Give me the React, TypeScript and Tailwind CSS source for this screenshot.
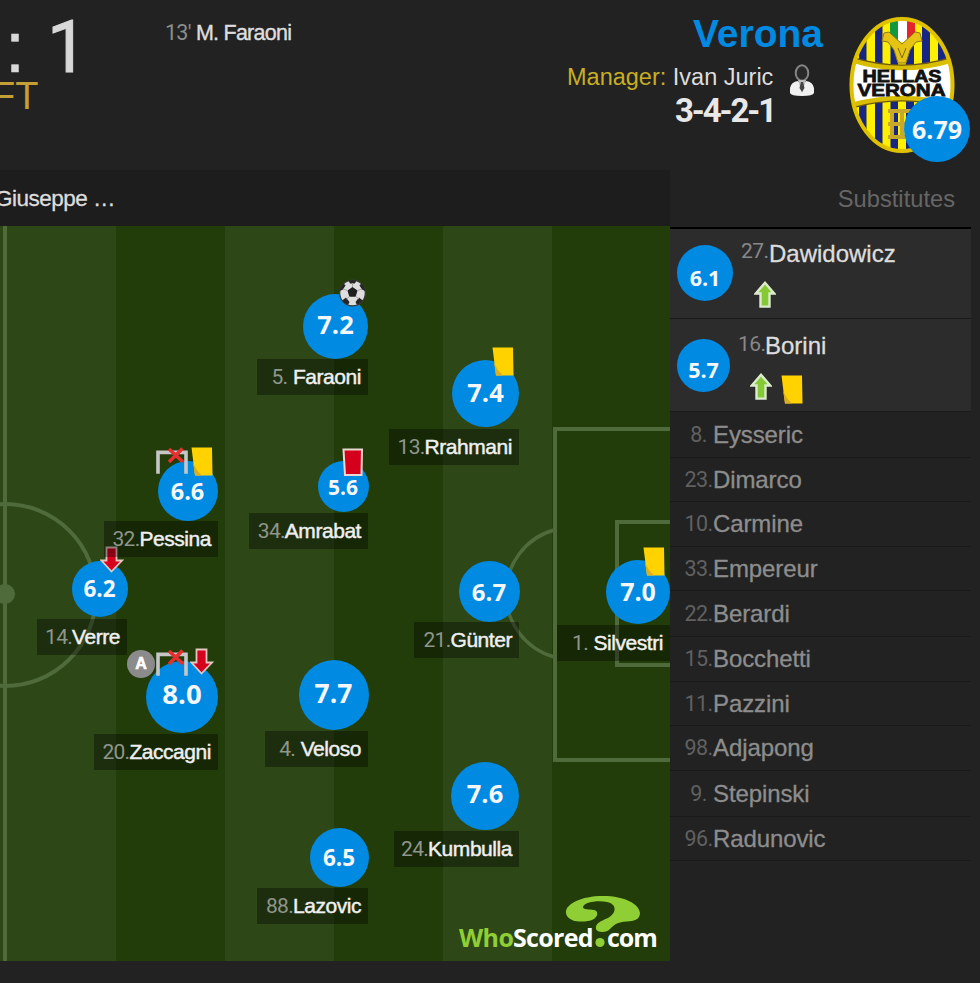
import React from "react";

type Badge = { kind: "yellow" | "red" | "ball" | "down" | "up" | "wood" | "assist"; x: number; y: number };
type Player = {
  num: string; name: string; rating: string;
  cx: number; cy: number; d: number; size: number; ty: number;
  left: number; right: number; top: number; badges: Badge[];
};

// Coordinates are relative to the pitch canvas; later players lie over earlier ones.
const players: Player[] = [
  { num: "5.", name: "Faraoni", rating: "7.2", cx: 335.5, cy: 100.5, d: 65, size: 25.5, ty: -2, left: 257, right: 368, top: 133, badges: [{ kind: "ball", x: 338, y: 53 }] },
  { num: "13.", name: "Rrahmani", rating: "7.4", cx: 485.5, cy: 167.5, d: 67, size: 25.5, ty: -1, left: 389, right: 519, top: 203, badges: [{ kind: "yellow", x: 492, y: 121 }] },
  { num: "14.", name: "Verre", rating: "6.2", cx: 99.5, cy: 363, d: 56, size: 22.5, ty: 0, left: 37, right: 127, top: 393, badges: [{ kind: "down", x: 100, y: 320 }] },
  { num: "32.", name: "Pessina", rating: "6.6", cx: 187.5, cy: 264.5, d: 60, size: 23.5, ty: 1, left: 104, right: 218, top: 295, badges: [{ kind: "wood", x: 156, y: 221 }, { kind: "yellow", x: 191, y: 221 }] },
  { num: "34.", name: "Amrabat", rating: "5.6", cx: 343, cy: 260, d: 51, size: 21, ty: 1, left: 249, right: 368, top: 287, badges: [{ kind: "red", x: 342, y: 222 }] },
  { num: "21.", name: "Günter", rating: "6.7", cx: 489, cy: 365.5, d: 61, size: 24, ty: 0, left: 414, right: 519, top: 396, badges: [] },
  { num: "1.", name: "Silvestri", rating: "7.0", cx: 638, cy: 366, d: 64, size: 25, ty: -1, left: 557, right: 670, top: 399, badges: [{ kind: "yellow", x: 643, y: 321 }] },
  { num: "20.", name: "Zaccagni", rating: "8.0", cx: 182, cy: 471, d: 72, size: 27.5, ty: -3, left: 94, right: 218, top: 508, badges: [{ kind: "assist", x: 127, y: 424 }, { kind: "wood", x: 156, y: 423 }, { kind: "down", x: 190, y: 422 }] },
  { num: "4.", name: "Veloso", rating: "7.7", cx: 333.5, cy: 469, d: 70, size: 26.5, ty: -2, left: 265, right: 368, top: 505, badges: [] },
  { num: "24.", name: "Kumbulla", rating: "7.6", cx: 485, cy: 569.5, d: 68, size: 25.5, ty: -2, left: 394, right: 519, top: 605, badges: [] },
  { num: "88.", name: "Lazovic", rating: "6.5", cx: 339, cy: 631.5, d: 59, size: 22.5, ty: 1, left: 257, right: 368, top: 662, badges: [] },
];

const reserves = [
  { num: "8.", name: "Eysseric", h: 46 },
  { num: "23.", name: "Dimarco", h: 44 },
  { num: "10.", name: "Carmine", h: 45 },
  { num: "33.", name: "Empereur", h: 44 },
  { num: "22.", name: "Berardi", h: 46 },
  { num: "15.", name: "Bocchetti", h: 45 },
  { num: "11.", name: "Pazzini", h: 44 },
  { num: "98.", name: "Adjapong", h: 45 },
  { num: "9.", name: "Stepinski", h: 46 },
  { num: "96.", name: "Radunovic", h: 44 },
];

function Icon({ kind }: { kind: Badge["kind"] }) {
  switch (kind) {
    case "yellow":
      return (
        <svg width="22" height="29" viewBox="0 0 22 29" className="block">
          <path d="M0.5 0.5H21L21.5 28.5H4Z" fill="#ffd200" />
          <path d="M2 15Q4 22 11 28.5H4Z" fill="#d9ae24" />
        </svg>
      );
    case "red":
      return (
        <svg width="22" height="29" viewBox="0 0 22 29" className="block">
          <path d="M1.5 1.5H20L19.5 27H3Z" fill="#d5001c" stroke="#ead6d2" strokeWidth="2" />
        </svg>
      );
    case "down":
      return (
        <svg width="24" height="28" viewBox="0 0 24 28" className="block">
          <path d="M6.5 1.5H16.5V14.5H22L11.5 25.5L1.5 14.5H6.5Z" fill="#d5001c" stroke="#e3c7c0" strokeWidth="1.8" />
        </svg>
      );
    case "up":
      return (
        <svg width="22" height="28" viewBox="0 0 22 28" className="block">
          <path d="M11 1.8L20.2 12.5H15.5V25.6H6.5V12.5H1.8Z" fill="#86c936" stroke="#dcebcb" strokeWidth="2.4" />
        </svg>
      );
    case "ball":
      return (
        <svg width="29" height="28" viewBox="0 0 29 28" className="block">
          <circle cx="14.5" cy="14" r="12.8" fill="#dedede" stroke="#3c3c3c" strokeWidth="1.2" />
          <path d="M14.5 8L19.5 11.5L17.7 17.8H11.3L9.5 11.5Z" fill="#1f1f1f" />
          <path d="M10.5 1.6Q14.5 0.4 18.5 1.6L16.8 4.4H12ZM2.4 9L5.3 4.6L7.6 6.2L5 10.5L1.8 12ZM26.6 9L23.7 4.6L21.4 6.2L24 10.5L27.2 12ZM4.2 21.5L8 18.6L11.5 23L10 26Q6.5 25 4.2 21.5ZM24.8 21.5L21 18.6L17.5 23L19 26Q22.5 25 24.8 21.5Z" fill="#262626" />
          <path d="M14.5 8V4M19.5 11.5L24 10M17.7 17.5L21 20M11.5 17.5L8.5 20M9.5 11.5L5 10" stroke="#a5a5a5" strokeWidth="1" />
        </svg>
      );
    case "wood":
      return (
        <svg width="32" height="30" viewBox="0 0 32 30" className="block">
          <path d="M2 26V5.5H30V26" fill="none" stroke="#c6c6c6" strokeWidth="3.6" transform="translate(0 -0.5) scale(1 1.05)" />
          <path d="M13 2L27 15M26.5 1.5L13 15" fill="none" stroke="#e5302f" strokeWidth="3.6" />
        </svg>
      );
    case "assist":
      return (
        <span className="flex h-[28px] w-[28px] items-center justify-center rounded-full bg-[#8b8b8b] text-[16px] font-bold leading-none text-white [-webkit-text-stroke:0.6px_#fff]">A</span>
      );
  }
}

function Rating({ value, d, size, ty }: { value: string; d: number; size: number; ty: number }) {
  return (
    <div className="flex items-center justify-center rounded-full bg-[#008ae2]" style={{ width: d, height: d }}>
      <span
        className="font-['Open_Sans','Noto_Sans',sans-serif] font-bold leading-none text-[#f4f6f8]"
        style={{ fontSize: size, transform: `translateY(${ty}px)` }}
      >
        {value}
      </span>
    </div>
  );
}

function PlayerPin({ p }: { p: Player }) {
  return (
    <>
      <div className="absolute" style={{ left: p.cx - p.d / 2, top: p.cy - p.d / 2 }}>
        <Rating value={p.rating} d={p.d} size={p.size} ty={p.ty} />
      </div>
      {p.badges.map((b) => (
        <div key={b.kind} className="absolute" style={{ left: b.x, top: b.y }}>
          <Icon kind={b.kind} />
        </div>
      ))}
      <div
        className="absolute flex h-[36px] items-center justify-end bg-black/35 pb-[2px] pr-[7px] text-[21px] leading-none tracking-[-0.45px]"
        style={{ left: p.left, top: p.top, width: p.right - p.left }}
      >
        <span className="w-[27px] pt-[2px] text-center font-['Roboto',sans-serif] tracking-[-0.7px] text-[#8f968b]">{p.num}</span>
        <span className="text-[#f0f0f0] [-webkit-text-stroke:0.45px_#f0f0f0]">{p.name}</span>
      </div>
    </>
  );
}

function PitchLines() {
  return (
    <svg width="670" height="736" viewBox="0 0 670 736" className="absolute inset-0">
      <g fill="none" stroke="#4f6b3b" strokeWidth="4">
        <path d="M5 0V736" />
        <circle cx="5" cy="369" r="91" />
        <path d="M670 203H555V534H670" />
        <path d="M670 296H617V439H670" />
        <path d="M554 304A66 66 0 0 0 554 431" strokeWidth="3.5" />
      </g>
      <circle cx="5" cy="368" r="10" fill="#4f6b3b" />
    </svg>
  );
}

function Brand() {
  return (
    <div className="absolute left-[459px] top-[669px] h-[56px] w-[200px]">
      <svg width="200" height="56" viewBox="0 0 200 56" className="absolute inset-0">
        <path d="M107 17C107 9 122 1 144 1C166 1 180 9 181 18C181 25 174 26 168 26.5C157 27 154 31 151 34C148 38 138 38 137 34C136 28 142 26 149 23C158 18 158 9 148 7C139 5 125 7 124 12C124 15 130 14 135 15C140 16 139 22 134 24.5C129 27 119 27 114 25.5C109 23 107 21 107 17Z" fill="#8fcf35" />
        <circle cx="141" cy="47.5" r="4.6" fill="#8fcf35" />
      </svg>
      <div className="absolute left-0 top-[29px] flex font-['Open_Sans','Noto_Sans',sans-serif] text-[25px] font-bold leading-[26px]">
        <span className="w-[54px] tracking-[-0.6px] text-[#8fcf35]">Who</span>
        <span className="w-[94px] tracking-[-0.7px] text-white">Scored</span>
        <span className="tracking-[-1px] text-white">com</span>
      </div>
    </div>
  );
}

function Crest() {
  return (
    <svg width="108" height="140" viewBox="0 0 108 140" className="block">
      <defs>
        <clipPath id="oval"><ellipse cx="54" cy="70" rx="50" ry="65" /></clipPath>
      </defs>
      <ellipse cx="54" cy="70" rx="52.5" ry="68.5" fill="#3a3420" />
      <g clipPath="url(#oval)">
        <rect width="108" height="140" fill="#fff000" />
        <path d="M11 0h7.5v140h-7.5zM27 0h7.5v140h-7.5zM42.5 0h7.5v140h-7.5zM58 0h8v140h-8zM74 0h8v140h-8zM90 0h8v140h-8z" fill="#172583" />
        <rect x="42" y="3" width="8" height="24" fill="#12983f" />
        <rect x="50" y="3" width="9" height="24" fill="#fff" />
        <rect x="59" y="3" width="8" height="24" fill="#e5242b" />
        <path d="M43 19L54 29L65 19L67 17L72 18L74 26L68 27L62 35L58 48H50L46 35L40 27L34 26L36 18L41 17Z" fill="#e6c414" stroke="#8f7a1c" />
        <path d="M50 33L54 43L58 33" fill="none" stroke="#7b681a" />
        <path d="M44 95V124M40 96H70M40 109H70M40 122H70M54 97V122M65 95V124" fill="none" stroke="#c9a92a" strokeWidth="4" />
        <path d="M0 44Q54 62 108 44V91Q54 75 0 91Z" fill="#fff" stroke="#6c5914" strokeWidth="7" />
        <path d="M0 44Q54 62 108 44V91Q54 75 0 91Z" fill="#fff" stroke="#d9bd00" strokeWidth="4.5" />
      </g>
      <ellipse cx="54" cy="70" rx="50.5" ry="66" fill="none" stroke="#dfc100" strokeWidth="4" />
      <g fill="#111" stroke="#111" strokeWidth="0.8" fontFamily="Liberation Sans, sans-serif" fontWeight="700" textAnchor="middle">
        <text x="54" y="66.5" fontSize="17" textLength="79" lengthAdjust="spacingAndGlyphs">HELLAS</text>
        <text x="53.5" y="81" fontSize="17" textLength="88" lengthAdjust="spacingAndGlyphs">VERONA</text>
      </g>
    </svg>
  );
}

function ManagerIcon() {
  return (
    <svg width="26" height="33" viewBox="0 0 26 33" className="block">
      <path d="M1 29V24Q2 18 9 17L13 22L17 17Q24 18 25 24V29Q24 32 13 32Q2 32 1 29Z" fill="#f1f1f1" />
      <ellipse cx="13" cy="9" rx="6.3" ry="7.7" fill="#292929" stroke="#858585" strokeWidth="2" />
      <path d="M9 16L13 29L17 16Z" fill="#bbb" />
      <path d="M12 18H14L15.5 24L13 28L10.5 24Z" fill="#444" />
    </svg>
  );
}

export default function App() {
  return (
    <div className="flex h-[983px] w-[980px] flex-col overflow-hidden bg-[#222] font-['Liberation_Sans',Arial,sans-serif] text-[#ddd]">
      <header className="flex h-[170px] shrink-0 justify-between">
        <div className="flex">
          <div className="w-[165px]">
            <div className="flex h-[80px] whitespace-nowrap pt-[9px] text-[72px] leading-[76px] text-[#d8d8d8]">
              <span className="w-[47px] pl-[5px] [-webkit-text-stroke:0.5px_#d8d8d8]">:</span>
              <span className="pt-px font-['Roboto',sans-serif] [-webkit-text-stroke:1px_#d8d8d8]">1</span>
            </div>
            <div className="-ml-[8px] text-[38px] leading-[32px] text-[#c49f35]">FT</div>
          </div>
          <p className="whitespace-nowrap pt-[21px] text-[21.5px] leading-[24px] tracking-[-0.75px]">
            <span className="font-['Roboto',sans-serif] text-[#8c8c8c]">13'</span> <span className="[-webkit-text-stroke:0.4px_#ddd]">M. Faraoni</span>
          </p>
        </div>
        <div className="flex">
          <div className="w-[256px]">
            <h1 className="pt-[12px] text-right text-[39px] font-bold leading-[44px] text-[#008ae2]">Verona</h1>
            <div className="flex">
              <div className="w-[206px] whitespace-nowrap text-right">
                <p className="pt-[7px] text-[23.5px] leading-[28px]"><span className="text-[#c7ae25]">Manager:</span> Ivan Juric</p>
                <p className="-mr-[2px] font-['Roboto',sans-serif] text-[33px] font-bold leading-[40px] tracking-[-2.1px] text-[#e8e8e8]">3-4-2-1</p>
              </div>
              <div className="pl-[16px] pt-[8px]"><ManagerIcon /></div>
            </div>
          </div>
          <div className="relative w-[157px] pl-[25px] pt-[15px]">
            <Crest />
            <div className="absolute left-[81px] top-[96px]"><Rating value="6.79" d={66} size={25} ty={0} /></div>
          </div>
        </div>
      </header>

      <div className="flex">
        <main className="w-[670px]">
          <div className="flex h-[56px] items-center bg-[#1d1d1d] pt-[2px]">
            <span className="-ml-[5px] text-[22.5px] leading-none tracking-[-0.5px] [-webkit-text-stroke:0.3px_#ddd]">Giuseppe …</span>
          </div>
          <div className="relative h-[735px] overflow-hidden bg-[linear-gradient(90deg,#2d4717_0_116px,#223d09_116px_225px,#2d4717_225px_334px,#223d09_334px_443px,#2d4717_443px_552px,#223d09_552px)]">
            <PitchLines />
            <Brand />
            {players.map((p) => <PlayerPin key={p.name} p={p} />)}
          </div>
        </main>

        <aside className="w-[301px]">
          <h2 className="h-[59px] border-b-2 border-black pr-[16px] pt-[15px] text-right text-[23.7px] leading-[28px] text-[#666]">Substitutes</h2>
          <div className="flex h-[90px] border-b border-[#1a1a1a] bg-[#2c2c2c] pl-[7px] pt-[16px]">
            <Rating value="6.1" d={56} size={21.5} ty={5} />
            <div className="-mt-[5px] pl-[8px]">
              <p className="flex leading-[28px]"><span className="-mt-[3px] w-[28px] font-['Roboto',sans-serif] text-[21px] tracking-[-0.6px] text-[#888]">27.</span><span className="text-[24px] [-webkit-text-stroke:0.3px_#ddd]">Dawidowicz</span></p>
              <div className="pl-[13px] pt-[13px]"><Icon kind="up" /></div>
            </div>
          </div>
          <div className="flex h-[93px] border-b border-[#1a1a1a] bg-[#2c2c2c] pl-[7px] pt-[20px]">
            <Rating value="5.7" d={53} size={21.5} ty={4} />
            <div className="-mt-[7px] pl-[8px]">
              <p className="flex leading-[28px]"><span className="-mt-[2px] w-[27px] font-['Roboto',sans-serif] text-[21px] tracking-[-0.6px] text-[#888]">16.</span><span className="text-[24px] [-webkit-text-stroke:0.3px_#ddd]">Borini</span></p>
              <div className="flex gap-[9px] pl-[12px] pt-[13px]">
                <Icon kind="up" />
                <div className="pt-[2px]"><Icon kind="yellow" /></div>
              </div>
            </div>
          </div>
          {reserves.map((r) => (
            <div key={r.name} className="flex items-center border-b border-[#1a1a1a] pl-[14px] leading-[28px]" style={{ height: r.h }}>
              <span className="w-[29px] text-center font-['Roboto',sans-serif] text-[21.5px] tracking-[-0.6px] text-[#606060]">{r.num}</span>
              <span className="text-[24px] tracking-[-0.1px] text-[#8d8d8d] [-webkit-text-stroke:0.3px_#8d8d8d]">{r.name}</span>
            </div>
          ))}
        </aside>
      </div>
    </div>
  );
}
